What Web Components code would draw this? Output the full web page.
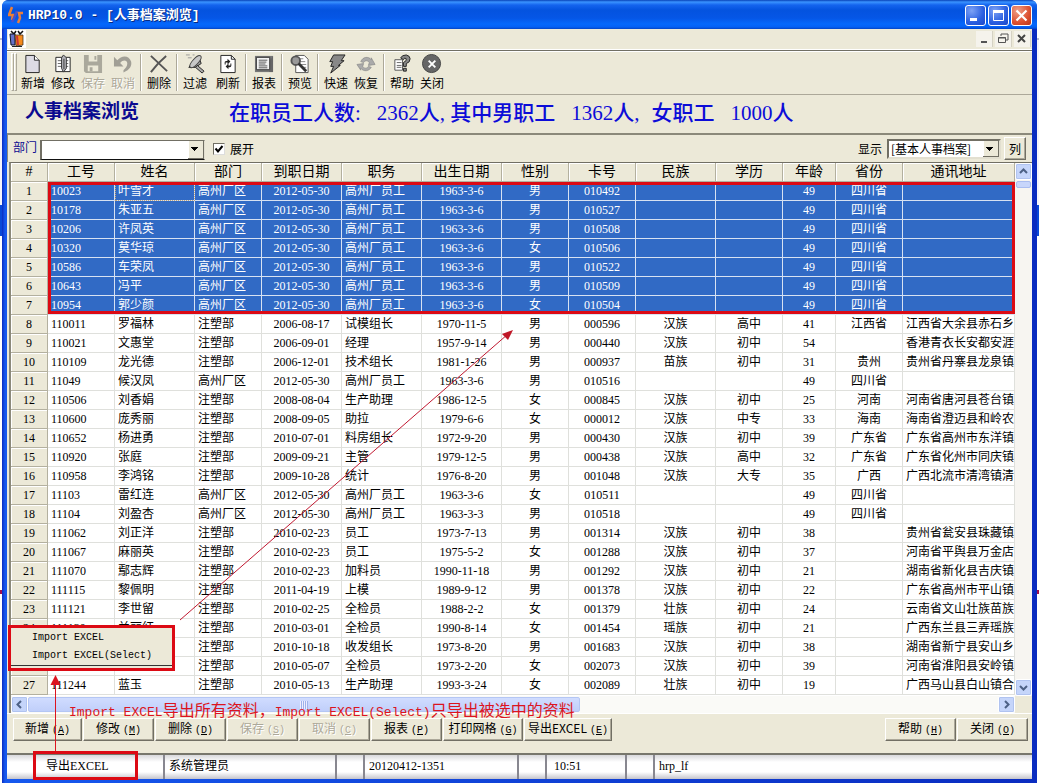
<!DOCTYPE html>
<html lang="zh-CN">
<head>
<meta charset="utf-8">
<title>HRP10.0 - [人事档案浏览]</title>
<style>
html,body{margin:0;min-height:100%}
body{background:linear-gradient(#fff 0 38px,#b9bdd0 38px 40px,#f6f4fb 40px 205px,#0a48d8 205px 236px,#fff 236px 590px,#a01050 590px 594px,#fff 594px);
 font:12px/16px "Liberation Serif","Noto Sans CJK SC",serif;color:#000;
 --face:#ece9d8;--mono:"Liberation Mono","Noto Sans CJK SC",monospace}
</style>
</head>
<body>
<hr-window></hr-window>
<script>
const define=(name,html,setup)=>customElements.define(name,class extends HTMLElement{
  constructor(){
    super();
    const t=document.createElement('template');
    t.innerHTML=html;
    this.attachShadow({mode:'open'}).append(t.content.cloneNode(true));
  }
  connectedCallback(){ if(setup&&!this.ready){this.ready=true;setup(this,this.shadowRoot);} }
});

const ICONS={
 add:'<path d="M3 1.5h9l5 5v13H3z" fill="#dddbe4" stroke="#222"/><path d="M12 1.5v5h5" fill="#fff" stroke="#222"/>',
 edit:'<path d="M3 3.500h15v15H3z" fill="#fff" stroke="#222"/><path d="M5 7h5M5 10h5M5 13h5M13 7h3M13 10h3M13 13h3" stroke="#666"/><path d="M9 4l2-3 3 3v11l-3 4-2-4z" fill="#b5b5bb" stroke="#333"/><path d="M11.500 5v11" stroke="#333"/>',
 save:'<path d="M1 1h19v19H3l-2-2z" fill="#aaa89c"/><path d="M6 1h9v7H6zM5 12h11v6H5z" fill="#ece9d8"/><path d="M12 2h2v4h-2zM7 14h3v4H7z" fill="#aaa89c"/>',
 undo:'<path d="M1 3v10h10L7.500 9.500C10 6 15 6 15 10c0 3-2 5-4 7v2.500c7-3 9-7 8-11.500C17 1 9 1 4.500 6.500z" fill="#a19f96"/>',
 del:'<path d="M2 2l17 16M18 2C12 7 7 12 2 19" stroke="#555" stroke-width="2" fill="none"/>',
 filter:'<path d="M4 14L14 2l3 8-6 4z" fill="#999" stroke="#222"/><ellipse cx="11" cy="8" rx="8" ry="3" transform="rotate(-48 11 8)" fill="#c8c8c8" stroke="#444"/><path d="M13 12l7 6-2 2-7-6z" fill="#aaa" stroke="#222"/><path d="M1 1h4M3 4h4M8 1h2" stroke="#999"/>',
 refresh:'<path d="M3 1.500h11l4 4v14H3z" fill="#fff" stroke="#222"/><path d="M14 1.500v4h4" fill="none" stroke="#222"/><path d="M7 11V9q0-2 3-2V5l3 3-3 3V9H8v2zM14 10v2q0 2-3 2v2l-3-3 3-3v2h2v-2z" fill="#222"/>',
 report:'<path d="M1 2h19v17H1z" fill="#777"/><path d="M2.500 3.500h14v13h-14z" fill="#f2f2f2" stroke="#333"/><path d="M5 6.500h9M5 8.500h8M5 10.500h7M5 12.500h9M5 14.500h9" stroke="#555"/><path d="M20 2v17h-4V8z" fill="#555" opacity=".5"/>',
 preview:'<path d="M6 1.500h9l4 4v14H6z" fill="#fff" stroke="#555"/><path d="M9 5h5M9 8h7M11 11h6M13 14h4" stroke="#888"/><circle cx="6" cy="7" r="4.500" fill="#999" stroke="#555" stroke-width="2"/><path d="M9 10l8 8" stroke="#333" stroke-width="3"/>',
 fast:'<path d="M8 1h12l-4 6h3l-6 5h2L5 20l3-7H5l2-5H4z" fill="#888" stroke="#222"/>',
 restore:'<path d="M5 8c2-5 8-6 11-2v-2l4 7-7 1 1-3c-2-3-5-2-6 0zM16 14c-2 4-8 5-11 1v2l-4-6 7-1-1 3c2 3 5 2 6 0z" fill="#aaa" stroke="#888" stroke-width=".7"/>',
 help:'<path d="M3 6h8v11H3z" fill="#fff" stroke="#555"/><path d="M5 9h5M5 12h5M5 14h5" stroke="#666"/><path d="M9 4q2-3 6-3 4 1 4 4 0 4-4 5v3h-3V9q4-2 3-4-2-2-3 1z" fill="#888" stroke="#222"/><path d="M12 15h3v3h-3z" fill="#888" stroke="#222"/>',
 close:'<circle cx="10" cy="10" r="9.500" fill="#666" stroke="#444"/><path d="M7 7l7 7M14 7l-7 7" stroke="#fff" stroke-width="2"/>'
};

define('tool-button',`<style>
:host{display:block;width:30px}
:host([spaced]){margin-left:3px}
button{all:unset;display:flex;flex-direction:column;align-items:center;width:100%;font:12px/16px "Noto Sans CJK SC",sans-serif}
button:disabled{color:#aca899;text-shadow:1px 1px #fff}
svg{width:20px;height:20px;display:block;margin-bottom:1px}
</style><button><svg viewBox="0 0 21 21"></svg><slot></slot></button>`,
(el,root)=>{
  root.querySelector('svg').innerHTML=ICONS[el.getAttribute('icon')];
  root.querySelector('button').disabled=el.hasAttribute('disabled');
});

define('push-button',`<style>
:host{display:block;flex:none}
button{box-sizing:border-box;width:100%;height:23px;margin:0;padding:0;border:1px solid;border-color:#fff #716f64 #716f64 #fff;box-shadow:inset -1px -1px #aca899;background:#ece9d8;color:#000;font:12px/16px "Noto Sans CJK SC",sans-serif;white-space:nowrap}
button:disabled{color:#aca899;text-shadow:1px 1px #fff}
span{font:10px/16px var(--mono);margin-left:3px}
u{text-underline-offset:1px}
</style><button><slot></slot><span hidden>(<u></u>)</span></button>`,
(el,root)=>{
  const key=el.getAttribute('key');
  if(key){root.querySelector('u').textContent=key;root.querySelector('span').hidden=false;}
  root.querySelector('button').disabled=el.hasAttribute('disabled');
});

define('title-bar',`<style>
:host{display:flex;align-items:center;height:29px;padding:0 5px 0 6px;border-radius:6px 6px 0 0;color:#fff;
 background:linear-gradient(#0842b8 0,#3a93ff 2px,#1464ee 5px,#0453df 10px,#0556e6 18px,#0468fc 24px,#0360f5 27px,#0344c4)}
h1{flex:1;margin:2px 0 0 4px;font:bold 13px/18px "Liberation Mono","Noto Sans CJK SC",monospace;text-shadow:1px 1px #0a2a80}
.logo{width:16px;height:18px}
button{all:unset;box-sizing:border-box;width:21px;height:21px;margin:2px 0 0 2px;border:1px solid #fff;border-radius:3px;background:radial-gradient(circle at 30% 25%,#7da2f5,#2a5fe0 60%,#1c48c8)}
.x{background:radial-gradient(circle at 30% 25%,#f0a088,#dc5030 60%,#b8341a)}
button svg{display:block;width:19px;height:19px}
</style>
<svg class="logo" viewBox="0 0 16 18"><path d="M4 1L1 9h4l-1 5" fill="none" stroke="#ef7f35" stroke-width="2.500"/><path d="M9 5L6 12l-2 4" fill="none" stroke="#4a50c8" stroke-width="2.500"/><path d="M15 7h-4l1 5-2 5" fill="none" stroke="#e9803c" stroke-width="2.500"/></svg>
<h1><slot></slot></h1>
<button aria-label="最小化"><svg viewBox="0 0 19 19"><path d="M4 12h7v3H4z" fill="#fff"/></svg></button>
<button aria-label="最大化"><svg viewBox="0 0 19 19"><path d="M4.500 5.500h10v9h-10z" fill="none" stroke="#fff"/><path d="M4 4h11v3H4z" fill="#fff"/></svg></button>
<button class="x" aria-label="关闭"><svg viewBox="0 0 19 19"><path d="M4.500 4.500l10 10M14.500 4.500l-10 10" stroke="#fff" stroke-width="2.200"/></svg></button>`);

define('menu-strip',`<style>
:host{display:flex;align-items:center;justify-content:flex-end;height:20px;border-bottom:1px solid #fff;padding-right:1px;gap:2px}
.app{width:18px;height:18px;margin-right:auto;margin-left:1px;background:#fff}
button{all:unset;width:16px;height:16px;background:#f5f3ec;border-right:1px solid #d5d2c4}
button svg{display:block;width:16px;height:16px}
</style>
<svg class="app" viewBox="0 0 18 18"><path d="M3 1l3 3 2-3M10 1l2 3 3-3" stroke="#111" stroke-width="1.500" fill="none"/><path d="M2 4h5v11H3z" fill="#6672c8" stroke="#112"/><path d="M7 5h8v10l-7 1z" fill="#f58a1c" stroke="#321" stroke-width=".7"/><path d="M9 6l1 9" stroke="#c33" stroke-width="2"/><path d="M4 16.500h10" stroke="#222"/></svg>
<button aria-label="最小化"><svg viewBox="0 0 16 16"><path d="M5 10h6v2H5z" fill="#555"/></svg></button>
<button aria-label="还原"><svg viewBox="0 0 16 16"><path d="M6 5V3h7v6h-2M3.500 6.500h7v5h-7zM3 7h8" fill="none" stroke="#555"/></svg></button>
<button aria-label="关闭"><svg viewBox="0 0 16 16"><path d="M4 4l7 7M11 4l-7 7" stroke="#444" stroke-width="2"/></svg></button>`);

define('tool-strip',`<style>
:host{display:flex;height:43px;border-top:1px solid #716f64;border-bottom:1px solid #aca899;box-shadow:inset 0 1px #fff;padding-left:4px}
i{flex:none;width:1px;margin:3px 2px;border-left:1px solid #aca899;background:#fff}
.grip{width:1px;margin:2px 0 3px;border:1px solid;border-color:#fff #aca899 #aca899 #fff;background:var(--face)}
.grip+.grip{margin-right:1px}
tool-button{margin-top:3px}
</style>
<i class="grip"></i><i class="grip"></i>
<tool-button icon="add">新增</tool-button><tool-button icon="edit">修改</tool-button><tool-button icon="save" disabled>保存</tool-button><tool-button icon="undo" disabled>取消</tool-button><i></i>
<tool-button icon="del">删除</tool-button><i></i>
<tool-button icon="filter">过滤</tool-button><tool-button spaced icon="refresh">刷新</tool-button><i></i>
<tool-button icon="report">报表</tool-button><i></i><tool-button icon="preview">预览</tool-button><i></i>
<tool-button icon="fast">快速</tool-button><tool-button icon="restore">恢复</tool-button><i></i>
<tool-button icon="help">帮助</tool-button><tool-button icon="close">关闭</tool-button>`);

define('page-heading',`<style>
:host{display:flex;height:38px;padding-left:18px;gap:90px;white-space:nowrap}
h2{margin:2px 0 0;font:bold 19px/26px "Noto Sans CJK SC",sans-serif;color:#0a0a90}
p{margin:4px 0 0;font:500 21px/28px "Liberation Serif","Noto Sans CJK SC",serif;color:#0c0cd8;display:flex}
span+span{margin-left:16px}
.wide{margin-left:12px}
</style><h2>人事档案浏览</h2><p><span>在职员工人数:</span><span>2362人, 其中男职工</span><span>1362人, </span><span class="wide">女职工</span><span>1000人</span></p>`);

define('filter-bar',`<style>
:host{display:flex;align-items:center;height:27px;border-top:2px solid #8b897a;border-left:1px solid #8b897a;padding:0 6px 0 5px;font:12px/16px "Noto Sans CJK SC",sans-serif;white-space:nowrap}
select{appearance:none;box-sizing:border-box;height:20px;border-radius:0;border:2px solid;border-color:#716f64 #e2dfd0 #e2dfd0 #716f64;padding:0 20px 0 2px;font:inherit;color:#000;
 background:linear-gradient(#000,#000) right 7px top 7px/5px 1px no-repeat,linear-gradient(#000,#000) right 6px top 6px/7px 1px no-repeat,linear-gradient(#000,#000) right 8px top 8px/3px 1px no-repeat,linear-gradient(#000,#000) right 9px top 9px/1px 1px no-repeat,linear-gradient(#716f64,#716f64) right bottom/16px 1px no-repeat,linear-gradient(90deg,#fff 1px,#ece9d8 1px 15px,#716f64 15px) right 0 top 0/16px 100% no-repeat,#fff}
.dept{width:165px;margin:2px 8px 0 3px;border-width:1px 1px 1px 2px;border-bottom-color:#111}
.dept-label{color:#0c0c90;margin-top:-4px}
input{appearance:none;width:12px;height:12px;box-sizing:border-box;margin:0 5px 0 0;border:1px solid;border-color:#716f64 #ddd #ddd #716f64;background:#fff}
input:checked{background:#fff url("data:image/svg+xml,%3Csvg xmlns='http://www.w3.org/2000/svg' viewBox='0 0 10 10'%3E%3Cpath d='M1.500 4.500l2.500 3 4.500-5.500' fill='none' stroke='black' stroke-width='2'/%3E%3C/svg%3E")}
.show{margin:0 5px 0 auto}
.view{width:114px}
push-button{width:22px;margin-left:3px}
</style>
<label class="dept-label" for="dept">部门</label><select class="dept" id="dept"><option></option></select>
<input type="checkbox" id="exp" checked><label for="exp">展开</label>
<label class="show" for="view">显示</label><select class="view" id="view"><option>[基本人事档案]</option></select>
<push-button>列</push-button>`);

const HEAD=['#','工号','姓名','部门','到职日期','职务','出生日期','性别','卡号','民族','学历','年龄','省份','通讯地址'];
const ROWS=`10023|叶雪才|高州厂区|2012-05-30|高州厂员工|1963-3-6|男|010492|||49|四川省|
10178|朱亚五|高州厂区|2012-05-30|高州厂员工|1963-3-6|男|010527|||49|四川省|
10206|许凤英|高州厂区|2012-05-30|高州厂员工|1963-3-6|男|010508|||49|四川省|
10320|莫华琼|高州厂区|2012-05-30|高州厂员工|1963-3-6|女|010506|||49|四川省|
10586|车荣凤|高州厂区|2012-05-30|高州厂员工|1963-3-6|男|010522|||49|四川省|
10643|冯平|高州厂区|2012-05-30|高州厂员工|1963-3-6|男|010509|||49|四川省|
10954|郭少颜|高州厂区|2012-05-30|高州厂员工|1963-3-6|女|010504|||49|四川省|
110011|罗福林|注塑部|2006-08-17|试模组长|1970-11-5|男|000596|汉族|高中|41|江西省|江西省大余县赤石乡
110021|文惠堂|注塑部|2006-09-01|经理|1957-9-14|男|000440|汉族|初中|54||香港青衣长安都安涯
110109|龙光德|注塑部|2006-12-01|技术组长|1981-1-26|男|000937|苗族|初中|31|贵州|贵州省丹寨县龙泉镇
11049|候汉凤|高州厂区|2012-05-30|高州厂员工|1963-3-6|男|010516|||49|四川省|
110506|刘香娟|注塑部|2008-08-04|生产助理|1986-12-5|女|000845|汉族|初中|25|河南|河南省唐河县苍台镇
110600|庞秀丽|注塑部|2008-09-05|助拉|1979-6-6|女|000012|汉族|中专|33|海南|海南省澄迈县和岭农
110652|杨进勇|注塑部|2010-07-01|料房组长|1972-9-20|男|000430|汉族|初中|39|广东省|广东省高州市东洋镇
110920|张庭|注塑部|2009-09-21|主管|1979-12-5|男|000438|汉族|高中|32|广东省|广东省化州市同庆镇
110958|李鸿铭|注塑部|2009-10-28|统计|1976-8-20|男|001048|汉族|大专|35|广西|广西北流市清湾镇清
11103|雷红连|高州厂区|2012-05-30|高州厂员工|1963-3-6|女|010511|||49|四川省|
11104|刘盈杏|高州厂区|2012-05-30|高州厂员工|1963-3-3|男|010518|||49|四川省|
111062|刘正洋|注塑部|2010-02-23|员工|1973-7-13|男|001314|汉族|初中|38||贵州省瓮安县珠藏镇
111067|麻丽英|注塑部|2010-02-23|员工|1975-5-2|女|001288|汉族|初中|37||河南省平舆县万金店
111070|鄢志辉|注塑部|2010-02-23|加料员|1990-11-18|男|001292|汉族|初中|21||湖南省新化县吉庆镇
111115|黎佩明|注塑部|2011-04-19|上模|1989-9-12|男|001378|汉族|初中|22||广东省高州市平山镇
111121|李世留|注塑部|2010-02-25|全检员|1988-2-2|女|001379|壮族|初中|24||云南省文山壮族苗族
111130|兰丽红|注塑部|2010-03-01|全检员|1990-8-14|女|001454|瑶族|初中|21||广西东兰县三弄瑶族
||注塑部|2010-10-18|收发组长|1973-8-20|男|001683|汉族|初中|38||湖南省新宁县安山乡
||注塑部|2010-05-07|全检员|1973-2-20|女|002073|汉族|初中|39||河南省淮阳县安岭镇
111244|蓝玉|注塑部|2010-05-13|生产助理|1993-3-24|女|002089|壮族|初中|19||广西马山县白山镇合`.split('\n').map(r=>r.split('|'));

define('data-grid',`<style>
:host{display:grid;grid-template-columns:1fr 17px;grid-template-rows:1fr 17px;flex:1;border-top:1px solid #716f64;border-left:2px solid #8b897a;margin-left:2px}
.view{position:relative;background:#fff;overflow:hidden}
table{width:100%;table-layout:fixed;border-collapse:separate;border-spacing:0}
th,td{box-sizing:border-box;height:19px;padding:0;border-right:1px solid #dfe0dc;border-bottom:1px solid #dfe0dc;line-height:18px;text-align:center;overflow:hidden;white-space:nowrap;font-weight:400}
th{background:var(--face);border-color:#b3b09f;box-shadow:inset 1px 1px #fff}
thead th{font-size:14px}
td:nth-child(2),td:nth-child(3),td:nth-child(4),td:nth-child(6),td:nth-child(14){text-align:left;padding-left:3px}
.sel td{background:#316ac5;color:#fff;border-color:#d8e2f2}
.focus{outline:1px dotted #c8a878;outline-offset:-1px}
.frame{position:absolute;left:37px;right:0;top:19px;height:132px;box-sizing:border-box;border:3px solid #dc0a14}
.v{display:flex;flex-direction:column;background:#f7f5f1}
.h{display:flex;background:#fafaf7}
button{all:unset;box-sizing:border-box;flex:none;width:17px;height:17px;border:1px solid #fff;border-radius:2px;background:#c5d5fa;box-shadow:inset 0 0 0 1px #b0c3f0}
button svg{display:block;width:15px;height:15px}
path{fill:none;stroke:#4d6185;stroke-width:2}
.vt{height:7px;margin:1px;border:1px solid #aabdf0;background:#c8d6fb;border-radius:2px;box-sizing:border-box;margin-bottom:auto}
.ht{width:55%;box-sizing:border-box;border:1px solid #b4c6f4;border-radius:2px;background:linear-gradient(#d0dcff,#c0cffa);margin:1px 0;display:flex;align-items:center;justify-content:center}
.ht i{width:8px;height:8px;background:repeating-linear-gradient(90deg,#eef 0 1px,#9db2ea 1px 2px)}
.h button:last-child{margin-left:auto}
</style>
<div class="view"><table><colgroup></colgroup><thead><tr></tr></thead><tbody></tbody></table><div class="frame"></div></div>
<div class="v"><button aria-label="上"><svg viewBox="0 0 15 15"><path d="M4 9l3.500-3.500L11 9"/></svg></button><div class="vt"></div><button aria-label="下"><svg viewBox="0 0 15 15"><path d="M4 6l3.500 3.500L11 6"/></svg></button></div>
<div class="h"><button aria-label="左"><svg viewBox="0 0 15 15"><path d="M9 4L5.500 7.500 9 11"/></svg></button><div class="ht"><i></i></div><button aria-label="右"><svg viewBox="0 0 15 15"><path d="M6 4l3.500 3.500L6 11"/></svg></button></div><div></div>`,
(el,root)=>{
  const cols=[37,67,80,67,80,80,80,67,67,80,67,53,67];
  root.querySelector('colgroup').innerHTML=cols.map(w=>`<col style="width:${w}px">`).join('')+'<col>';
  root.querySelector('thead tr').innerHTML=HEAD.map(h=>`<th scope="col">${h}</th>`).join('');
  root.querySelector('tbody').innerHTML=ROWS.map((r,i)=>`<tr class="${i<7?'sel':''}"><th scope="row">${i===24||i===25?'':i+1}</th>${r.map((c,j)=>`<td${i===0&&j===1?' class="focus"':''}>${c}</td>`).join('')}</tr>`).join('');
});

define('action-bar',`<style>
:host{display:flex;align-items:flex-start;gap:1px;padding:4px 4px 0 6px;height:35px;border-top:1px solid #fff}
.s{width:71px}.m{width:80px}.l{width:88px}.r{margin-left:auto}
.f{width:69px}
</style>
<push-button class="f" key="A">新增</push-button><push-button class="s" key="M">修改</push-button><push-button class="s" key="D">删除</push-button><push-button class="s" key="S" disabled>保存</push-button><push-button class="s" key="C" disabled>取消</push-button><push-button class="s" key="P">报表</push-button><push-button class="m" key="G">打印网格</push-button><push-button class="l" key="E">导出EXCEL</push-button>
<push-button class="s r" key="H">帮助</push-button><push-button class="s" key="O">关闭</push-button>`);

define('status-bar',`<style>
:host{display:flex;height:24px;border-top:2px solid #77766c;background:linear-gradient(#d8d8dc,#fff 7px 17px,#c4c4cc);line-height:23px}
span{flex:none;box-sizing:border-box;padding-left:4px;border-left:2px solid #888790;white-space:nowrap}
.export{border:0;width:156px;padding-left:39px}
.user{width:172px}.gap{width:28px}.date{width:154px}.time{width:80px;padding-left:7px}
</style><span class="export">导出EXCEL</span><span class="user">系统管理员</span><span class="gap"></span><span class="date">20120412-1351</span><span class="gap"></span><span class="time">10:51</span><span class="gap"></span><span>hrp_lf</span>`);

define('context-menu',`<style>
:host{position:absolute;left:6px;bottom:112px;box-sizing:border-box;width:167px;border:3px solid #dc0a14;background:var(--face);padding:1px 0 2px}
button{all:unset;display:block;box-sizing:border-box;width:100%;padding-left:21px;font:10px/18px var(--mono)}
div{border-bottom:1px solid #333}
</style><div><button>Import EXCEL</button><button>Import EXCEL(Select)</button></div>`);

define('note-layer',`<style>
:host{position:absolute;inset:0;pointer-events:none}
svg{position:absolute;left:0;bottom:0;width:520px;height:460px}
p{position:absolute;left:67px;bottom:58px;margin:0;font:16px/24px "Noto Sans CJK SC",sans-serif;color:#dc1420;white-space:nowrap}
span{font:13px/24px var(--mono)}
.box{position:absolute;left:31px;bottom:3px;width:105px;height:29px;box-sizing:border-box;border:3px solid #dc0a14}
</style>
<svg viewBox="0 0 520 460"><path d="M178 297L506 11" stroke="#c01830" fill="none"/><path d="M511 7l-5 10-6-6z" fill="#c01828"/><path d="M53 360h1v69h-1z" fill="#dc1420"/><path d="M53.500 352l5 10h-10z" fill="#dc1420"/></svg>
<p><span>Import EXCEL</span>导出所有资料，<span>Import EXCEL(Select)</span>只导出被选中的资料</p>
<div class="box"></div>`);

define('hr-window',`<style>
:host{display:block;position:relative;margin:0 2px}
main{display:flex;flex-direction:column;box-sizing:border-box;min-height:100vh;border-radius:7px 7px 0 0;background:linear-gradient(90deg,#0a2cc0,#1658ee 3px 5px,#0a2cc0 calc(100% - 1px))}
.body{flex:1;display:flex;flex-direction:column;margin:0 5px 4px;background:var(--face)}
</style>
<main><title-bar>HRP10.0 - [人事档案浏览]</title-bar>
<div class="body"><menu-strip></menu-strip><tool-strip></tool-strip><page-heading></page-heading><filter-bar></filter-bar><data-grid></data-grid><action-bar></action-bar><status-bar></status-bar></div></main>
<context-menu></context-menu><note-layer></note-layer>`);
</script>
</body>
</html>
